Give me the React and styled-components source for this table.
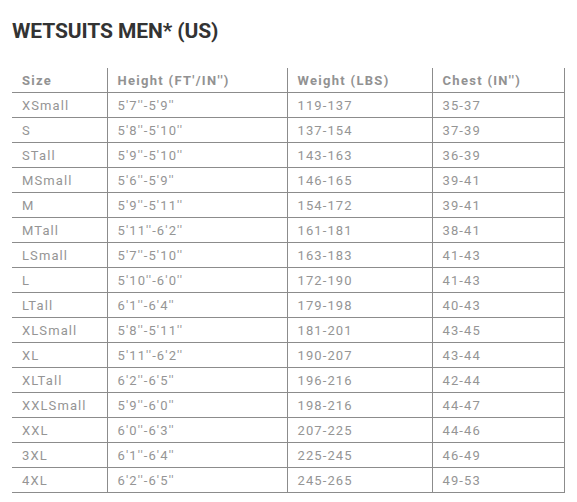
import styled, { createGlobalStyle } from "styled-components";

const GlobalStyle = createGlobalStyle`
  body {
    margin: 0;
    background: #fff;
    font-family: Roboto, "Liberation Sans", sans-serif;
  }
`;

const Page = styled.div`
  padding: 18px 13px 0 12px;
`;

const Title = styled.h1`
  margin: 0 0 24px;
  font-size: 21px;
  line-height: 26px;
  font-weight: 700;
  color: #333;
  letter-spacing: -0.1px;
`;

const Table = styled.table`
  width: 552px;
  table-layout: fixed;
  border-collapse: collapse;
`;

const Th = styled.th`
  height: 24px;
  padding: 0 0 0 10px;
  text-align: left;
  font-size: 13px;
  font-weight: 700;
  letter-spacing: 1.3px;
  color: #929292;
  border-bottom: 1px solid #8c8c8c;
  border-left: ${(p) => (p.$first ? "none" : "1px solid #8c8c8c")};
  border-right: ${(p) => (p.$last ? "1px solid #8c8c8c" : "none")};
`;

const Td = styled.td`
  height: 24px;
  padding: 0 0 0 10px;
  font-size: 13px;
  letter-spacing: 1.1px;
  color: #959595;
  border-bottom: 1px solid #8c8c8c;
  border-left: ${(p) => (p.$first ? "none" : "1px solid #8c8c8c")};
  border-right: ${(p) => (p.$last ? "1px solid #8c8c8c" : "none")};
`;

const columns = [
  { label: "Size", width: 95 },
  { label: "Height (FT'/IN'')", width: 180 },
  { label: "Weight (LBS)", width: 145 },
  { label: "Chest (IN'')", width: 132 },
];

const rows = [
  ["XSmall", "5'7''-5'9''", "119-137", "35-37"],
  ["S", "5'8''-5'10''", "137-154", "37-39"],
  ["STall", "5'9''-5'10''", "143-163", "36-39"],
  ["MSmall", "5'6''-5'9''", "146-165", "39-41"],
  ["M", "5'9''-5'11''", "154-172", "39-41"],
  ["MTall", "5'11''-6'2''", "161-181", "38-41"],
  ["LSmall", "5'7''-5'10''", "163-183", "41-43"],
  ["L", "5'10''-6'0''", "172-190", "41-43"],
  ["LTall", "6'1''-6'4''", "179-198", "40-43"],
  ["XLSmall", "5'8''-5'11''", "181-201", "43-45"],
  ["XL", "5'11''-6'2''", "190-207", "43-44"],
  ["XLTall", "6'2''-6'5''", "196-216", "42-44"],
  ["XXLSmall", "5'9''-6'0''", "198-216", "44-47"],
  ["XXL", "6'0''-6'3''", "207-225", "44-46"],
  ["3XL", "6'1''-6'4''", "225-245", "46-49"],
  ["4XL", "6'2''-6'5''", "245-265", "49-53"],
];

const App = () => (
  <Page>
    <GlobalStyle />
    <Title>WETSUITS MEN* (US)</Title>
    <Table>
      <colgroup>
        {columns.map((c) => (
          <col key={c.label} style={{ width: c.width }} />
        ))}
      </colgroup>
      <thead>
        <tr>
          {columns.map((c, i) => (
            <Th key={c.label} $first={i === 0} $last={i === columns.length - 1}>
              {c.label}
            </Th>
          ))}
        </tr>
      </thead>
      <tbody>
        {rows.map((r) => (
          <tr key={r[0]}>
            {r.map((v, i) => (
              <Td key={i} $first={i === 0} $last={i === r.length - 1}>
                {v}
              </Td>
            ))}
          </tr>
        ))}
      </tbody>
    </Table>
  </Page>
);

export default App;
